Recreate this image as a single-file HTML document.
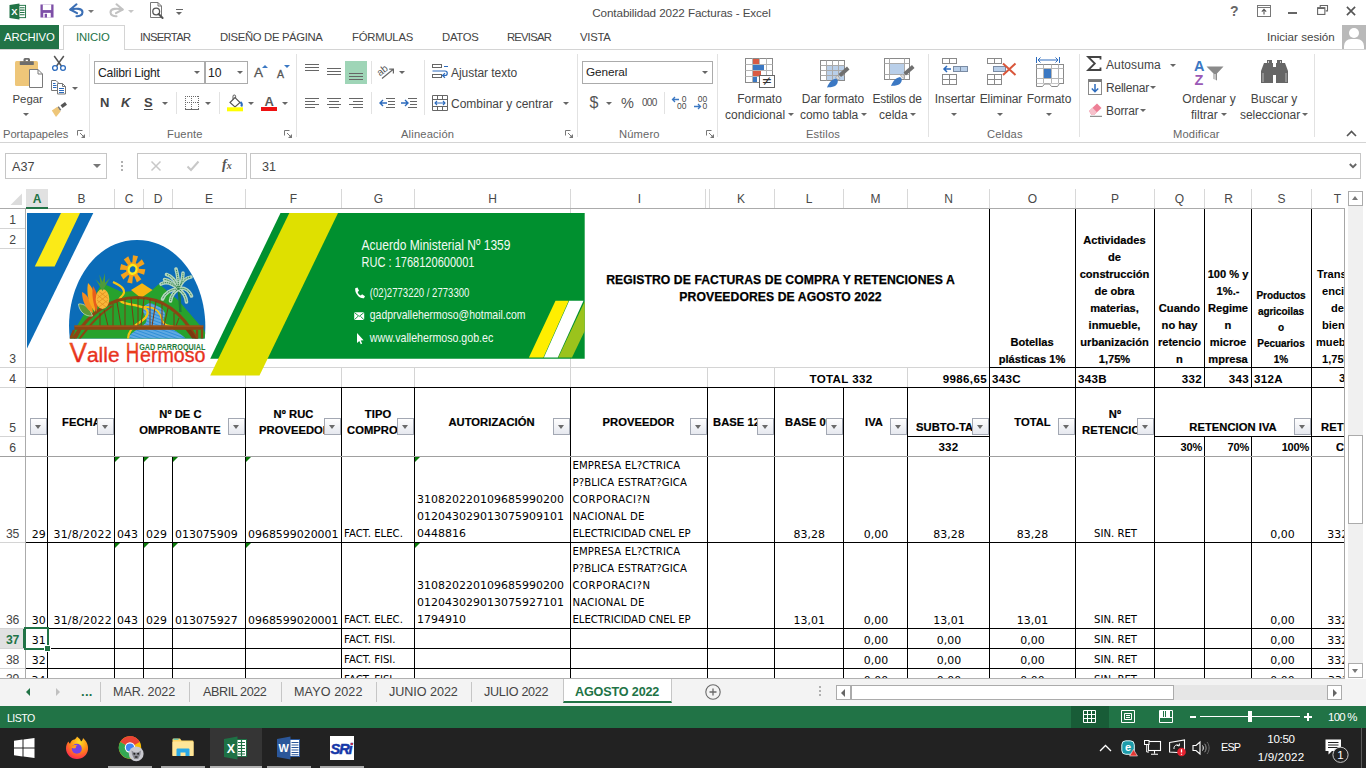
<!DOCTYPE html>
<html lang="es">
<head>
<meta charset="utf-8">
<title>Contabilidad 2022 Facturas - Excel</title>
<style>
*{box-sizing:border-box;margin:0;padding:0}
html,body{width:1366px;height:768px;overflow:hidden;background:#fff}
body{font-family:"Liberation Sans",sans-serif;font-size:12px;color:#444;position:relative}
.a{position:absolute}
.t{position:absolute;white-space:nowrap;line-height:1}
svg{position:absolute;overflow:visible}
/* ribbon */
.rl{position:absolute;white-space:nowrap;font-size:11.6px;color:#444;line-height:1}
.gl{position:absolute;white-space:nowrap;font-size:11.2px;color:#666;line-height:1;letter-spacing:.15px}
.sep{position:absolute;width:1px;background:#e2e2e2;top:54px;height:83px}
.car{position:absolute;width:0;height:0;border-left:3px solid transparent;border-right:3px solid transparent;border-top:3px solid #666}
/* grid */
.ch{position:absolute;top:190px;height:18px;line-height:18px;text-align:center;font-size:12px;color:#484848}
.rh{position:absolute;left:0;width:25px;text-align:center;font-size:12.2px;letter-spacing:-.2px;color:#444;line-height:1}
.c{position:absolute;white-space:nowrap;line-height:1;color:#000;font-size:12.4px}
.d{font-family:"DejaVu Sans","Liberation Sans",sans-serif}
.hb{position:absolute;white-space:nowrap;line-height:1;color:#000;font-weight:bold;font-size:11.2px;letter-spacing:.05px;text-align:center;-webkit-text-stroke:.2px #000}
.fb{position:absolute;width:17px;height:17px;border:1px solid #a3a8b3;background:linear-gradient(#fefefe,#e6e8ef)}
.fb:after{content:"";position:absolute;left:4px;top:6px;border-left:3.5px solid transparent;border-right:3.5px solid transparent;border-top:4px solid #6a6a6a}
.gt{position:absolute;width:0;height:0;border-top:5px solid #0a7a0a;border-right:5px solid transparent}
</style>
</head>
<body>
<!-- ===== TITLE BAR ===== -->
<div class="a" id="titlebar" style="left:0;top:0;width:1366px;height:25px;background:#fff"></div>
<!-- excel icon -->
<svg style="left:9px;top:3px" width="18" height="17" viewBox="0 0 18 18">
  <rect x="8" y="2.5" width="9" height="13" fill="#fff" stroke="#217346" stroke-width="1"/>
  <path d="M11 5h5M11 7.5h5M11 10h5M11 12.5h5" stroke="#217346" stroke-width="1.2"/>
  <path d="M0 2.2 L10.5 0.5 V17.5 L0 15.8Z" fill="#217346"/>
  <text x="5.2" y="12.6" font-family="Liberation Sans, sans-serif" font-size="10" font-weight="bold" fill="#fff" text-anchor="middle">X</text>
</svg>
<!-- save icon -->
<svg style="left:40px;top:4px" width="14" height="14" viewBox="0 0 15 15">
  <path d="M0.5 0.5h14v14h-14z" fill="#7d4fa7"/>
  <rect x="3" y="0.5" width="9" height="6" fill="#fff"/>
  <rect x="3.5" y="9.5" width="8" height="5" fill="#fff"/>
  <rect x="5" y="10.5" width="2.5" height="4" fill="#7d4fa7"/>
</svg>
<!-- undo -->
<svg style="left:68px;top:2px" width="18" height="16" viewBox="0 0 18 16">
  <path d="M2.500 7.500 C8 6 14.500 6.500 14.500 10.200 C14.500 13 11.500 14.500 8.500 14.300" fill="none" stroke="#3b6fb5" stroke-width="2.100" stroke-linecap="round"/>
  <path d="M8.500 2.300 L2.300 7.500 L9 11.200" fill="none" stroke="#3b6fb5" stroke-width="2.100" stroke-linecap="round" stroke-linejoin="round"/>
</svg>
<div class="car" style="left:88px;top:10px;border-top-color:#777"></div>
<!-- redo -->
<svg style="left:107px;top:2px" width="18" height="16" viewBox="0 0 18 16">
  <path d="M15.500 7.500 C10 6 3.500 6.500 3.500 10.200 C3.500 13 6.500 14.500 9.500 14.300" fill="none" stroke="#c2c2c2" stroke-width="2.100" stroke-linecap="round"/>
  <path d="M9.500 2.300 L15.700 7.500 L9 11.200" fill="none" stroke="#c2c2c2" stroke-width="2.100" stroke-linecap="round" stroke-linejoin="round"/>
</svg>
<div class="car" style="left:128px;top:10px;border-top-color:#c6c6c6"></div>
<!-- print preview -->
<svg style="left:149px;top:2px" width="17" height="18" viewBox="0 0 17 18">
  <path d="M1.5 0.5h7.5l3.5 3.5v11.5h-11z" fill="#fff" stroke="#777" stroke-width="1"/>
  <path d="M9 0.5v3.5h3.5" fill="none" stroke="#777" stroke-width="1"/>
  <circle cx="7.2" cy="9.5" r="3.4" fill="#fff" stroke="#555" stroke-width="1.3"/>
  <path d="M9.6 12 L13.6 16" stroke="#555" stroke-width="2" stroke-linecap="round"/>
</svg>
<!-- customize QAT -->
<div class="a" style="left:176px;top:9px;width:7px;height:1px;background:#666"></div>
<div class="car" style="left:176px;top:12px;border-top-color:#666;border-left-width:3.5px;border-right-width:3.5px"></div>
<div class="t" style="left:0;width:1363px;text-align:center;top:7px;font-size:11.7px;color:#4a4a4a;letter-spacing:-.1px">Contabilidad 2022 Facturas - Excel</div>
<!-- window buttons -->
<div class="t" style="left:1230px;top:4px;font-size:14px;font-weight:bold;color:#666">?</div>
<svg style="left:1257px;top:5px" width="14" height="12" viewBox="0 0 14 12">
  <rect x="0.5" y="0.5" width="13" height="11" fill="#fff" stroke="#777"/>
  <path d="M0.5 2.5h13" stroke="#777"/>
  <path d="M7 9.5v-5M4.8 6.6 7 4.4 9.2 6.6" fill="none" stroke="#555" stroke-width="1.1"/>
</svg>
<div class="a" style="left:1288px;top:12px;width:9px;height:2px;background:#666"></div>
<svg style="left:1317px;top:5px" width="11" height="10" viewBox="0 0 12 11">
  <path d="M3.5 2.5v-2h8v6h-2" fill="none" stroke="#666" stroke-width="1.2"/>
  <rect x="0.6" y="3" width="8" height="7.4" fill="#fff" stroke="#666" stroke-width="1.2"/>
  <path d="M0.6 3.6h8" stroke="#666" stroke-width="1.6"/>
</svg>
<svg style="left:1346px;top:6px" width="10" height="10" viewBox="0 0 11 11">
  <path d="M1 1l9 9M10 1l-9 9" stroke="#555" stroke-width="1.8"/>
</svg>

<!-- ===== RIBBON TABS ===== -->
<div class="a" style="left:0;top:49px;width:1366px;height:1px;background:#d4d4d4"></div>
<div class="a" style="left:0;top:25px;width:59px;height:24px;background:#217346"></div>
<div class="t" style="left:4px;top:31.5px;font-size:11.3px;color:#fff;letter-spacing:-0.11px">ARCHIVO</div>
<div class="a" style="left:63px;top:25px;width:62px;height:25px;background:#fff;border:1px solid #d4d4d4;border-bottom:0"></div>
<div class="t" style="left:76px;top:31.5px;font-size:11.3px;color:#217346;letter-spacing:-0.13px">INICIO</div>
<div class="t" style="left:140px;top:31.5px;font-size:11.3px;letter-spacing:-0.70px">INSERTAR</div>
<div class="t" style="left:220px;top:31.5px;font-size:11.3px;letter-spacing:-0.34px">DISEÑO DE PÁGINA</div>
<div class="t" style="left:352px;top:31.5px;font-size:11.3px;letter-spacing:-0.22px">FÓRMULAS</div>
<div class="t" style="left:442px;top:31.5px;font-size:11.3px;letter-spacing:-0.28px">DATOS</div>
<div class="t" style="left:507px;top:31.5px;font-size:11.3px;letter-spacing:-0.80px">REVISAR</div>
<div class="t" style="left:580px;top:31.5px;font-size:11.3px;letter-spacing:-0.26px">VISTA</div>
<div class="t" style="left:1267px;top:31px;font-size:11.6px">Iniciar sesión</div>
<div class="a" style="left:1342px;top:25px;width:24px;height:24px;background:#b9b9b9;overflow:hidden">
  <div class="a" style="left:7px;top:3px;width:10px;height:10px;border-radius:50%;background:#fff"></div>
  <div class="a" style="left:2px;top:14px;width:20px;height:16px;border-radius:7px 7px 0 0;background:#fff"></div>
</div>
<!-- ===== RIBBON BODY ===== -->
<div class="a" style="left:0;top:142px;width:1366px;height:1px;background:#d4d4d4"></div>
<!-- group separators -->
<div class="sep" style="left:89px"></div>
<div class="sep" style="left:296px"></div>
<div class="sep" style="left:577px"></div>
<div class="sep" style="left:717px"></div>
<div class="sep" style="left:928px"></div>
<div class="sep" style="left:1079px"></div>
<div class="sep" style="left:1314px"></div>

<!-- Portapapeles -->
<svg style="left:14px;top:57px" width="30" height="32" viewBox="0 0 30 32">
  <rect x="1" y="4" width="23" height="25" rx="1.5" fill="#eec679"/>
  <rect x="5.800" y="4.200" width="14" height="3.800" rx=".6" fill="#6d6d6d"/>
  <path d="M9.500 4.500 v-2 a1.500 1.500 0 0 1 1.500 -1.500 h3.500 a1.500 1.500 0 0 1 1.500 1.500 v2z M11.700 2.700 v1.500 h2.200 v-1.500z" fill="#6d6d6d" fill-rule="evenodd"/>
  <path d="M15.5 12.5h8.5l4.5 4.5v13.5h-13z" fill="#fff" stroke="#7a7a7a" stroke-width="1"/>
  <path d="M24 12.5v4.5h4.5" fill="none" stroke="#7a7a7a" stroke-width="1"/>
</svg>
<div class="rl" style="left:12.500px;top:94px;font-size:11.4px">Pegar</div>
<div class="car" style="left:23px;top:113px"></div>
<!-- scissors -->
<svg style="left:51px;top:55px" width="16" height="17" viewBox="0 0 16 17">
  <path d="M3.2 1 L10.6 11.2 M12.8 1 L5.4 11.2" stroke="#555" stroke-width="1.5" fill="none"/>
  <circle cx="4" cy="13" r="2.4" fill="#fff" stroke="#2c6bbd" stroke-width="1.3"/>
  <circle cx="12" cy="13" r="2.4" fill="#fff" stroke="#2c6bbd" stroke-width="1.3"/>
</svg>
<!-- copy -->
<svg style="left:51px;top:80px" width="16" height="15" viewBox="0 0 16 15">
  <path d="M0.500 0.500h4.500l2.500 2.500v7.500h-7z" fill="#fff" stroke="#777"/>
  <path d="M2 3.500h2.500M2 5.500h3.500M2 7.500h3.500" stroke="#2c6bbd" stroke-width="1"/>
  <path d="M6.500 3.500h5l3 3v7.500h-8z" fill="#fff" stroke="#777"/>
  <path d="M11.500 3.500v3h3" fill="none" stroke="#777"/>
  <path d="M8 8.500h5M8 10.500h5M8 12.500h5" stroke="#2c6bbd" stroke-width="1"/>
</svg>
<div class="car" style="left:72px;top:87px"></div>
<!-- format painter -->
<svg style="left:51px;top:101px" width="17" height="17" viewBox="0 0 17 17">
  <path d="M9.5 4.2 L14 1 L16 3.8 L11.5 7z" fill="#555"/>
  <path d="M7.8 5.2 L10.3 8.8 L8.8 9.9 L6.3 6.3z" fill="#777"/>
  <path d="M0.8 9.6 L6.4 5.8 L9.6 10.4 L5 16 Z" fill="#eec679"/>
</svg>
<div class="gl" style="left:3px;top:129px;letter-spacing:-.05px">Portapapeles</div>
<svg style="left:77px;top:130px" width="8" height="8" viewBox="0 0 8 8"><path d="M0.500 5.500V0.500H5.500" fill="none" stroke="#777"/><path d="M3 3l3.500 3.500" fill="none" stroke="#777"/><path d="M8 4V8H4Z" fill="#777"/></svg>

<!-- Fuente -->
<div class="a" style="left:94px;top:61px;width:111px;height:23px;border:1px solid #ababab;background:#fff"></div>
<div class="a" style="left:205px;top:61px;width:43px;height:23px;border:1px solid #ababab;background:#fff"></div>
<div class="t" style="left:98px;top:67px;font-size:12.2px;color:#222;letter-spacing:-.2px">Calibri Light</div>
<div class="car" style="left:194px;top:71px"></div>
<div class="t" style="left:208px;top:67px;font-size:12.2px;color:#222">10</div>
<div class="car" style="left:237px;top:71px"></div>
<div class="t" style="left:254px;top:66px;font-size:13.500px;color:#555;-webkit-text-stroke:.3px #555">A</div>
<div class="a" style="left:262px;top:65px;width:0;height:0;border-left:3px solid transparent;border-right:3px solid transparent;border-bottom:3.500px solid #3b78c3"></div>
<div class="t" style="left:277px;top:68.500px;font-size:10.500px;color:#555;-webkit-text-stroke:.3px #555">A</div>
<div class="a" style="left:284px;top:65px;width:0;height:0;border-left:3px solid transparent;border-right:3px solid transparent;border-top:3.500px solid #3b78c3"></div>
<div class="t" style="left:100px;top:96px;font-size:13px;font-weight:bold;color:#444">N</div>
<div class="t" style="left:121px;top:96px;font-size:13px;font-weight:bold;font-style:italic;color:#444">K</div>
<div class="t" style="left:144px;top:96px;font-size:13px;font-weight:bold;color:#444;text-decoration:underline;text-underline-offset:2px">S</div>
<div class="car" style="left:162px;top:102px"></div>
<div class="a" style="left:176px;top:92px;width:1px;height:22px;background:#e2e2e2"></div>
<svg style="left:185px;top:96px" width="14" height="14" viewBox="0 0 14 14">
  <path d="M0 0.500h14M0.500 0v13M13.500 0v13M6.500 0v13M0 6.500h14" fill="none" stroke="#6a6a6a" stroke-width="1" stroke-dasharray="1 1" shape-rendering="crispEdges"/><path d="M0 13.500h14" stroke="#6a6a6a" stroke-width="1" shape-rendering="crispEdges"/>
</svg>
<div class="car" style="left:205px;top:102px"></div>
<div class="a" style="left:219px;top:92px;width:1px;height:22px;background:#e2e2e2"></div>
<!-- fill bucket -->
<svg style="left:227px;top:94px" width="17" height="18" viewBox="0 0 17 18">
  <path d="M3 8.5 L8 3.5 L13 8.5 L8 13z" fill="#fff" stroke="#555" stroke-width="1.1"/>
  <path d="M6 5.5 V2.3 a1.3 1.3 0 0 1 2.6 0 V4" fill="none" stroke="#555" stroke-width="1"/>
  <path d="M13.4 8 c1.5 1.3 1.8 3 0.9 4.5" fill="none" stroke="#2c6bbd" stroke-width="2"/>
  <rect x="0" y="13.300" width="16" height="4" fill="#ffff00"/>
</svg>
<div class="car" style="left:248px;top:102px"></div>
<div class="t" style="left:264.500px;top:95px;font-size:13px;font-weight:bold;color:#5a5a5a">A</div>
<div class="a" style="left:261px;top:107px;width:16px;height:4px;background:#ee1111"></div>
<div class="car" style="left:282px;top:102px"></div>
<div class="gl" style="left:167px;top:129px">Fuente</div>
<svg style="left:284px;top:130px" width="8" height="8" viewBox="0 0 8 8"><path d="M0.500 5.500V0.500H5.500" fill="none" stroke="#777"/><path d="M3 3l3.500 3.500" fill="none" stroke="#777"/><path d="M8 4V8H4Z" fill="#777"/></svg>

<!-- Alineación -->
<div class="a" style="left:345px;top:61px;width:22px;height:23px;background:#9fd5b7"></div>
<svg style="left:305px;top:61px" width="62" height="52" viewBox="0 0 62 52">
  <g stroke="#666" stroke-width="1" fill="none">
    <path d="M0 3.5h14M0 6.5h14M0 9.5h14"/>
    <path d="M22 7.500h14M22 10.5h14M22 13.5h14"/>
    <path d="M44 12.5h14M44 15.5h14M44 18.5h14"/>
    <path d="M0 37.5h14M0 40.5h10M0 43.5h14M0 46.5h10"/>
    <path d="M22 37.5h14M24 40.5h10M22 43.5h14M24 46.5h10"/>
    <path d="M44 37.5h14M48 40.5h10M44 43.5h14M48 46.5h10"/>
  </g>
</svg>
<div class="a" style="left:371px;top:61px;width:1px;height:23px;background:#e2e2e2"></div>
<div class="a" style="left:371px;top:92px;width:1px;height:22px;background:#e2e2e2"></div>
<!-- orientation -->
<svg style="left:378px;top:63px" width="19" height="18" viewBox="0 0 19 18">
  <text x="0" y="10" font-family="Liberation Sans, sans-serif" font-size="10" fill="#555" transform="rotate(-38 6 9)">ab</text>
  <path d="M4 15.5 L15 6.5 M15.4 10.5 V6.2 H11.2" fill="none" stroke="#666" stroke-width="1.2"/>
</svg>
<div class="car" style="left:399px;top:71px"></div>
<!-- indent -->
<svg style="left:379px;top:97px" width="40" height="13" viewBox="0 0 40 13">
  <g stroke="#666" stroke-width="1" fill="none"><path d="M7 1.500h9M9 4.500h7M9 7.500h7M7 10.5h9"/><path d="M29 1.500h9M31 4.500h7M31 7.500h7M29 10.5h9"/></g>
  <g stroke="#2c6bbd" stroke-width="1.4" fill="none"><path d="M8 6H1M4 3L1 6l3 3"/><path d="M22 6h7M26 3l3 3-3 3"/></g>
</svg>
<div class="a" style="left:424px;top:60px;width:1px;height:55px;background:#e2e2e2"></div>
<!-- wrap text -->
<svg style="left:432px;top:64px" width="17" height="16" viewBox="0 0 17 16">
  <g fill="none" stroke="#666" stroke-width="1"><rect x="0.5" y="0.5" width="9" height="3"/><rect x="0.5" y="10.5" width="9" height="3"/></g>
  <path d="M0.5 7h12.5a2 2 0 0 1 0 4.500h-2" fill="none" stroke="#2c6bbd" stroke-width="1.2"/>
  <path d="M13 9.300 10.500 11.500 13 13.700" fill="none" stroke="#2c6bbd" stroke-width="1.2"/>
  <path d="M12 2.500h4" stroke="#2c6bbd" stroke-width="1"/>
</svg>
<div class="rl" style="left:451px;top:67px;font-size:12px;letter-spacing:-.05px">Ajustar texto</div>
<!-- merge -->
<svg style="left:432px;top:95px" width="16" height="16" viewBox="0 0 16 16">
  <path d="M0.5 0.5h15v15h-15zM0.5 4.500h15M0.5 11.500h15M5.500 0.500v4M10.500 0.500v4M5.500 11.500v4M10.500 11.500v4" fill="none" stroke="#666" stroke-width="1"/>
  <path d="M3 8h10M5 6 3 8l2 2M11 6l2 2-2 2" fill="none" stroke="#2c6bbd" stroke-width="1.1"/>
</svg>
<div class="rl" style="left:451px;top:98px;font-size:12px">Combinar y centrar</div>
<div class="car" style="left:563px;top:102px"></div>
<div class="gl" style="left:401px;top:129px">Alineación</div>
<svg style="left:565px;top:130px" width="8" height="8" viewBox="0 0 8 8"><path d="M0.500 5.500V0.500H5.500" fill="none" stroke="#777"/><path d="M3 3l3.500 3.500" fill="none" stroke="#777"/><path d="M8 4V8H4Z" fill="#777"/></svg>
<!-- Número -->
<div class="a" style="left:582px;top:61px;width:131px;height:23px;border:1px solid #ababab;background:#fff"></div>
<div class="t" style="left:586px;top:67px;font-size:11.8px;color:#222;letter-spacing:-.1px">General</div>
<div class="car" style="left:702px;top:71px"></div>
<div class="t" style="left:589.500px;top:95px;font-size:16px;color:#555">$</div>
<div class="car" style="left:606px;top:102px"></div>
<div class="t" style="left:621px;top:95.500px;font-size:14.500px;color:#555">%</div>
<div class="t" style="left:642px;top:98.300px;font-size:10px;color:#505050;letter-spacing:-.7px">000</div>
<div class="a" style="left:664px;top:92px;width:1px;height:22px;background:#e2e2e2"></div>
<svg style="left:671px;top:96px" width="38" height="14" viewBox="0 0 38 14">
  <g font-family="Liberation Sans, sans-serif" font-size="8.500" fill="#4a4a4a">
    <text x="10.800" y="6.300">0</text><text x="6" y="13.400">00</text>
    <text x="26.800" y="6.300">00</text><text x="31.500" y="13.400">0</text>
  </g>
  <g stroke="#3b78c3" stroke-width="1.300" fill="none"><path d="M8 3.500H1.500M4 1l-2.500 2.500L4 6"/><path d="M23 10.500h6.500M27 8l2.500 2.500L27 13"/></g>
</svg>
<div class="gl" style="left:619px;top:129px">Número</div>
<svg style="left:706px;top:130px" width="8" height="8" viewBox="0 0 8 8"><path d="M0.500 5.500V0.500H5.500" fill="none" stroke="#777"/><path d="M3 3l3.500 3.500" fill="none" stroke="#777"/><path d="M8 4V8H4Z" fill="#777"/></svg>

<!-- Estilos: Formato condicional -->
<svg style="left:745px;top:58px" width="31" height="30" viewBox="0 0 31 30">
  <rect x="0.5" y="0.5" width="27" height="24" fill="#fff" stroke="#8a8a8a"/>
  <path d="M0.5 6.500h27M0.5 12.500h27M0.5 18.500h27M7.500 0.500v24M14.500 0.500v24M21.500 0.500v24" stroke="#b5b5b5" stroke-width="1" fill="none"/>
  <rect x="8" y="1" width="6" height="5" fill="#d95b43"/>
  <rect x="8" y="7" width="11" height="5" fill="#3b78c3"/>
  <rect x="8" y="13" width="8" height="5" fill="#d95b43"/>
  <rect x="8" y="19" width="4" height="5" fill="#3b78c3"/>
  <rect x="14.500" y="17.500" width="15" height="12" fill="#fff" stroke="#666"/>
  <text x="22" y="27.300" font-family="DejaVu Sans, sans-serif" font-size="12.500" fill="#333" text-anchor="middle">≠</text>
</svg>
<div class="rl" style="left:727px;width:65px;text-align:center;top:93px;font-size:12px">Formato</div>
<div class="rl" style="left:725px;top:109px;font-size:12px">condicional</div>
<div class="car" style="left:788px;top:113px"></div>
<!-- Dar formato como tabla -->
<svg style="left:820px;top:60px" width="31" height="29" viewBox="0 0 31 29">
  <rect x="0.5" y="0.5" width="24" height="20" fill="#fff" stroke="#8a8a8a"/>
  <rect x="7" y="6" width="17" height="14" fill="#b9cfe9"/>
  <path d="M0.5 5.500h24M0.5 10.500h24M0.5 15.500h24M6.500 0.500v20M12.500 0.500v20M18.500 0.500v20" stroke="#a9a9a9" stroke-width="1" fill="none"/>
  <path d="M18.500 14 L27 6.500 L29.500 9.500 L21 17z" fill="#6f6f6f"/>
  <path d="M17.500 15.500 L20 18.500 L18 20 L15.500 17z" fill="#d9d9d9" stroke="#888" stroke-width=".5"/>
  <path d="M7 27.500 C9 22 12 19.500 16 18.500 C19 20 18 24 15 26 C12 27.500 9 27 7 27.500z" fill="#3b78c3"/>
</svg>
<div class="rl" style="left:800px;width:66px;text-align:center;top:93px;font-size:12px;letter-spacing:-.1px">Dar formato</div>
<div class="rl" style="left:800px;top:109px;font-size:12px;letter-spacing:-.05px">como tabla</div>
<div class="car" style="left:861px;top:113px"></div>
<!-- Estilos de celda -->
<svg style="left:884px;top:58px" width="32" height="30" viewBox="0 0 32 30">
  <rect x="0.5" y="0.5" width="25" height="21" fill="#fff" stroke="#8a8a8a"/>
  <path d="M0.5 5.500h25M0.5 16.500h25M5.500 0.500v21M20.500 0.500v21" stroke="#a9a9a9" stroke-width="1" fill="none"/>
  <rect x="6" y="6" width="14" height="10" fill="#b9cfe9"/>
  <path d="M19.500 14.500 L28 7 L30.500 10 L22 17.500z" fill="#6f6f6f"/>
  <path d="M18.500 16 L21 19 L19 20.500 L16.500 17.500z" fill="#d9d9d9" stroke="#888" stroke-width=".5"/>
  <path d="M7 28 C9 22.500 12 20 16 19 C19 20.500 18 24.500 15 26.500 C12 28 9 27.500 7 28z" fill="#3b78c3"/>
</svg>
<div class="rl" style="left:864px;width:66px;text-align:center;top:93px;font-size:12px;letter-spacing:-.3px">Estilos de</div>
<div class="rl" style="left:879px;top:109px;font-size:12px">celda</div>
<div class="car" style="left:910px;top:113px"></div>
<div class="gl" style="left:806px;top:129px">Estilos</div>

<!-- Celdas: Insertar -->
<svg style="left:942px;top:58px" width="27" height="28" viewBox="0 0 27 28">
  <g fill="#fff" stroke="#8a8a8a" stroke-width="1"><rect x="0.5" y="0.5" width="14" height="5"/><path d="M7.500 0.500v5"/><rect x="0.5" y="16.500" width="14" height="10"/><path d="M0.5 21.500h14M7.500 16.500v10"/></g>
  <rect x="11.500" y="8.500" width="14" height="5" fill="#b9cfe9" stroke="#7a8ba3"/><path d="M18.500 8.500v5" stroke="#7a8ba3"/>
  <path d="M9 11H2M5 8l-3 3 3 3" fill="none" stroke="#2c6bbd" stroke-width="1.500"/>
</svg>
<div class="rl" style="left:922px;width:66px;text-align:center;top:93px;font-size:12px">Insertar</div>
<div class="car" style="left:951px;top:113px"></div>
<!-- Eliminar -->
<svg style="left:987px;top:58px" width="30" height="28" viewBox="0 0 30 28">
  <g fill="#fff" stroke="#8a8a8a" stroke-width="1"><rect x="0.5" y="0.5" width="14" height="5"/><path d="M7.500 0.500v5"/><rect x="0.5" y="16.500" width="14" height="10"/><path d="M0.5 21.500h14M7.500 16.500v10"/></g>
  <rect x="6.500" y="8.500" width="12" height="5" fill="#b9cfe9" stroke="#7a8ba3"/>
  <path d="M16 5.500 L28.500 17 M28.500 5.500 L16 17" stroke="#d9573b" stroke-width="2" fill="none"/>
</svg>
<div class="rl" style="left:968px;width:66px;text-align:center;top:93px;font-size:12px;letter-spacing:-.1px">Eliminar</div>
<div class="car" style="left:997px;top:113px"></div>
<!-- Formato -->
<svg style="left:1036px;top:56px" width="29" height="32" viewBox="0 0 29 32">
  <path d="M0.5 1v6M23.500 1v6M2 4h20M4.500 1.500 2 4l2.500 2.500M19.500 1.500 22 4l-2.500 2.500" fill="none" stroke="#2c6bbd" stroke-width="1"/>
  <rect x="0.5" y="8.500" width="27" height="19" fill="#fff" stroke="#8a8a8a"/>
  <path d="M0.5 12.500h27M0.5 22.500h27M7.500 8.500v19M15.500 8.500v19M22.500 8.500v19" stroke="#b5b5b5" fill="none"/>
  <rect x="8" y="13" width="7" height="9" fill="#3b78c3"/>
  <path d="M0.5 27.500v3h6l2-2.500h5l2 2.500h6l2-3" fill="#fff" stroke="#8a8a8a"/>
</svg>
<div class="rl" style="left:1016px;width:66px;text-align:center;top:93px;font-size:12px">Formato</div>
<div class="car" style="left:1046px;top:113px"></div>
<div class="gl" style="left:987px;top:129px">Celdas</div>

<!-- Modificar -->
<svg style="left:1087px;top:56px" width="15" height="15" viewBox="0 0 15 15">
  <path d="M13.500 3.500V1H1.200L7.800 7.500 1.200 14h12.300v-2.500" fill="none" stroke="#444" stroke-width="1.800"/>
</svg>
<div class="rl" style="left:1106px;top:59px;font-size:12px;letter-spacing:.1px">Autosuma</div>
<div class="car" style="left:1170px;top:64px"></div>
<svg style="left:1088px;top:79px" width="14" height="16" viewBox="0 0 14 16">
  <rect x="0.5" y="0.5" width="13" height="15" fill="#fff" stroke="#8a8a8a"/>
  <rect x="0.5" y="0.5" width="13" height="2.500" fill="#777"/>
  <path d="M7 5v7.500M3.800 9.500 7 12.700l3.200-3.200" fill="none" stroke="#2c6bbd" stroke-width="1.500"/>
</svg>
<div class="rl" style="left:1106px;top:82px;font-size:12px;letter-spacing:-.22px">Rellenar</div>
<div class="car" style="left:1150px;top:86px"></div>
<svg style="left:1088px;top:102px" width="16" height="15" viewBox="0 0 16 15">
  <path d="M1 9 L9 1.500 L13.500 6 L6 13 H3.500z" fill="#ee7f96"/>
  <path d="M1 9 L4.500 5.800 L9 10.200 L6 13 H3.500z" fill="#f6c2cc"/>
  <path d="M2 14.300h12" stroke="#777" stroke-width="1"/>
</svg>
<div class="rl" style="left:1106px;top:105px;font-size:12px;letter-spacing:-.12px">Borrar</div>
<div class="car" style="left:1140px;top:109px"></div>
<!-- Ordenar y filtrar -->
<svg style="left:1193px;top:57px" width="32" height="30" viewBox="0 0 32 30">
  <text x="1" y="13.500" font-family="Liberation Sans, sans-serif" font-size="14.500" font-weight="bold" fill="#3b78c3">A</text>
  <text x="1.500" y="28" font-family="Liberation Sans, sans-serif" font-size="14.500" font-weight="bold" fill="#9b59b6">Z</text>
  <path d="M13.500 9.500h17l-6.500 7v7l-3.500-1.500v-5.500z" fill="#8a8a8a"/>
  <path d="M22 17v6" stroke="#fff" stroke-width="1"/>
</svg>
<div class="rl" style="left:1176px;width:66px;text-align:center;top:93px;font-size:12px">Ordenar y</div>
<div class="rl" style="left:1191px;top:109px;font-size:12px">filtrar</div>
<div class="car" style="left:1221px;top:113px"></div>
<!-- Buscar y seleccionar -->
<svg style="left:1261px;top:60px" width="27" height="24" viewBox="0 0 27 24">
  <path d="M6 0h5v3h1v20H0V11l3-8h3z" fill="#666"/>
  <path d="M21 0h-5v3h-1v20h12V11l-3-8h-3z" fill="#666"/>
  <rect x="11" y="7" width="5" height="8" fill="#666"/>
  <path d="M2 13v9M25 13v9" stroke="#bbb" stroke-width="1"/>
  <path d="M7.500 1v2M19.500 1v2" stroke="#ccc" stroke-width="1"/>
</svg>
<div class="rl" style="left:1241px;width:66px;text-align:center;top:93px;font-size:12px">Buscar y</div>
<div class="rl" style="left:1240px;top:109px;font-size:12px;letter-spacing:-.05px">seleccionar</div>
<div class="car" style="left:1302px;top:113px"></div>
<div class="gl" style="left:1173px;top:129px">Modificar</div>
<svg style="left:1346px;top:130px" width="11" height="7" viewBox="0 0 11 7"><path d="M1 6l4.500-4.500L10 6" fill="none" stroke="#555" stroke-width="1.600"/></svg>
<!-- ===== FORMULA BAR ===== -->
<div class="a" style="left:5px;top:153px;width:102px;height:26px;border:1px solid #c6c6c6;background:#fff"></div>
<div class="t" style="left:12px;top:160.800px;font-size:12.6px;color:#444">A37</div>
<div class="car" style="left:93px;top:164px;border-left-width:4px;border-right-width:4px;border-top-width:4px;border-top-color:#777"></div>
<div class="a" style="left:121px;top:161px;width:2px;height:2px;background:#b0b0b0;box-shadow:0 4px 0 #b0b0b0,0 8px 0 #b0b0b0"></div>
<div class="a" style="left:137px;top:153px;width:110px;height:26px;border:1px solid #c6c6c6;background:#fff"></div>
<svg style="left:150px;top:160px" width="12" height="12" viewBox="0 0 12 12"><path d="M1.500 1.500l9 9M10.500 1.500l-9 9" stroke="#c8c8c8" stroke-width="1.500"/></svg>
<svg style="left:186px;top:160px" width="14" height="12" viewBox="0 0 14 12"><path d="M1.500 6.500l3.500 3.500 7.500-8.500" fill="none" stroke="#c8c8c8" stroke-width="2"/></svg>
<div class="t" style="left:222px;top:158px;font-family:'Liberation Serif',serif;font-style:italic;font-size:14px;color:#555;font-weight:bold">f<span style="font-size:10px">x</span></div>
<div class="a" style="left:250px;top:153px;width:1111px;height:26px;border:1px solid #c6c6c6;background:#fff"></div>
<div class="t" style="left:262px;top:160.800px;font-size:12.6px;color:#444">31</div>
<svg style="left:1349px;top:162.500px" width="8" height="6" viewBox="0 0 8 6"><path d="M0.800 1l3.200 3.200 3.200-3.200" fill="none" stroke="#666" stroke-width="1.900"/></svg>
<!-- ===== GRID ===== -->
<div class="a" id="grid" style="left:0;top:189px;width:1345px;height:490px;background:#fff;overflow:hidden"></div>
<div class="a" style="left:26px;top:189px;width:22px;height:18px;background:#e1e1e1"></div>
<div class="a" style="left:26px;top:207px;width:22px;height:2px;background:#217346"></div>
<div class="a" style="left:0;top:208px;width:26px;height:1px;background:#ababab"></div>
<div class="a" style="left:48px;top:208px;width:1297px;height:1px;background:#ababab"></div>
<svg style="left:10px;top:193px" width="13" height="13" viewBox="0 0 13 13"><path d="M12 0.500V12H0.500z" fill="#dcdcdc"/></svg>
<div class="a" style="left:114px;top:189px;width:1px;height:19px;background:#d8d8d8"></div>
<div class="a" style="left:143px;top:189px;width:1px;height:19px;background:#d8d8d8"></div>
<div class="a" style="left:172px;top:189px;width:1px;height:19px;background:#d8d8d8"></div>
<div class="a" style="left:245px;top:189px;width:1px;height:19px;background:#d8d8d8"></div>
<div class="a" style="left:341px;top:189px;width:1px;height:19px;background:#d8d8d8"></div>
<div class="a" style="left:414px;top:189px;width:1px;height:19px;background:#d8d8d8"></div>
<div class="a" style="left:570px;top:189px;width:1px;height:19px;background:#d8d8d8"></div>
<div class="a" style="left:705px;top:189px;width:1px;height:19px;background:#d8d8d8"></div>
<div class="a" style="left:774px;top:189px;width:1px;height:19px;background:#d8d8d8"></div>
<div class="a" style="left:843px;top:189px;width:1px;height:19px;background:#d8d8d8"></div>
<div class="a" style="left:907px;top:189px;width:1px;height:19px;background:#d8d8d8"></div>
<div class="a" style="left:989px;top:189px;width:1px;height:19px;background:#d8d8d8"></div>
<div class="a" style="left:1075px;top:189px;width:1px;height:19px;background:#d8d8d8"></div>
<div class="a" style="left:1154px;top:189px;width:1px;height:19px;background:#d8d8d8"></div>
<div class="a" style="left:1204px;top:189px;width:1px;height:19px;background:#d8d8d8"></div>
<div class="a" style="left:1251px;top:189px;width:1px;height:19px;background:#d8d8d8"></div>
<div class="a" style="left:1311px;top:189px;width:1px;height:19px;background:#d8d8d8"></div>
<div class="a" style="left:709px;top:189px;width:1px;height:19px;background:#d8d8d8"></div>
<div class="ch" style="left:22.0px;width:30px;color:#217346;font-weight:bold;">A</div>
<div class="ch" style="left:66.5px;width:30px;">B</div>
<div class="ch" style="left:114.0px;width:30px;">C</div>
<div class="ch" style="left:143.0px;width:30px;">D</div>
<div class="ch" style="left:194.0px;width:30px;">E</div>
<div class="ch" style="left:278.5px;width:30px;">F</div>
<div class="ch" style="left:363.5px;width:30px;">G</div>
<div class="ch" style="left:477.5px;width:30px;">H</div>
<div class="ch" style="left:624.5px;width:30px;">I</div>
<div class="ch" style="left:726.0px;width:30px;">K</div>
<div class="ch" style="left:794.0px;width:30px;">L</div>
<div class="ch" style="left:860.5px;width:30px;">M</div>
<div class="ch" style="left:933.5px;width:30px;">N</div>
<div class="ch" style="left:1017.5px;width:30px;">O</div>
<div class="ch" style="left:1100.0px;width:30px;">P</div>
<div class="ch" style="left:1164.5px;width:30px;">Q</div>
<div class="ch" style="left:1213.5px;width:30px;">R</div>
<div class="ch" style="left:1266.5px;width:30px;">S</div>
<div class="ch" style="left:1322.5px;width:30px;">T</div>
<div class="a" style="left:25px;top:208px;width:1px;height:471px;background:#ababab"></div>
<div class="a" style="left:0px;top:228px;width:25px;height:1px;background:#d4d4d4"></div>
<div class="a" style="left:0px;top:248px;width:25px;height:1px;background:#d4d4d4"></div>
<div class="a" style="left:0px;top:367px;width:25px;height:1px;background:#d4d4d4"></div>
<div class="a" style="left:0px;top:387px;width:25px;height:1px;background:#d4d4d4"></div>
<div class="a" style="left:0px;top:436px;width:25px;height:1px;background:#d4d4d4"></div>
<div class="a" style="left:0px;top:542px;width:25px;height:1px;background:#d4d4d4"></div>
<div class="a" style="left:0px;top:628px;width:25px;height:1px;background:#d4d4d4"></div>
<div class="a" style="left:0px;top:648px;width:25px;height:1px;background:#d4d4d4"></div>
<div class="a" style="left:0px;top:668px;width:25px;height:1px;background:#d4d4d4"></div>
<div class="a" style="left:0;top:629px;width:25px;height:19px;background:#e1e1e1"></div>
<div class="a" style="left:23px;top:629px;width:2px;height:19px;background:#217346"></div>
<div class="rh" style="top:214.22px;">1</div>
<div class="rh" style="top:234.22px;">2</div>
<div class="rh" style="top:353.22px;">3</div>
<div class="rh" style="top:373.22px;">4</div>
<div class="rh" style="top:422.22px;">5</div>
<div class="rh" style="top:442.22px;">6</div>
<div class="rh" style="top:528.22px;">35</div>
<div class="rh" style="top:614.22px;">36</div>
<div class="rh" style="top:634.22px;color:#217346;font-weight:bold;">37</div>
<div class="rh" style="top:654.22px;">38</div>
<div class="rh" style="top:673.42px;">39</div>
<div class="a" style="left:26px;top:367px;width:963px;height:1px;background:#d4d4d4"></div>
<div class="a" style="left:47px;top:368px;width:1px;height:19px;background:#d4d4d4"></div>
<div class="a" style="left:114px;top:368px;width:1px;height:19px;background:#d4d4d4"></div>
<div class="a" style="left:143px;top:368px;width:1px;height:19px;background:#d4d4d4"></div>
<div class="a" style="left:172px;top:368px;width:1px;height:19px;background:#d4d4d4"></div>
<div class="a" style="left:245px;top:368px;width:1px;height:19px;background:#d4d4d4"></div>
<div class="a" style="left:341px;top:368px;width:1px;height:19px;background:#d4d4d4"></div>
<div class="a" style="left:414px;top:368px;width:1px;height:19px;background:#d4d4d4"></div>
<div class="a" style="left:570px;top:368px;width:1px;height:19px;background:#d4d4d4"></div>
<div class="a" style="left:707px;top:368px;width:1px;height:19px;background:#d4d4d4"></div>
<div class="a" style="left:774px;top:368px;width:1px;height:19px;background:#d4d4d4"></div>
<div class="a" style="left:907px;top:368px;width:1px;height:19px;background:#d4d4d4"></div>
<div class="a" style="left:570px;top:209px;width:1px;height:158px;background:#d4d4d4"></div>
<div class="a" style="left:989px;top:209px;width:1px;height:178px;background:#000"></div>
<div class="a" style="left:1075px;top:209px;width:1px;height:178px;background:#000"></div>
<div class="a" style="left:1154px;top:209px;width:1px;height:178px;background:#000"></div>
<div class="a" style="left:1204px;top:209px;width:1px;height:178px;background:#000"></div>
<div class="a" style="left:1251px;top:209px;width:1px;height:178px;background:#000"></div>
<div class="a" style="left:1311px;top:209px;width:1px;height:178px;background:#000"></div>
<div class="a" style="left:989px;top:367px;width:355px;height:1px;background:#000"></div>
<div class="a" style="left:26px;top:387px;width:1318px;height:1px;background:#000"></div>
<div class="a" style="left:47px;top:387px;width:1px;height:69px;background:#000"></div>
<div class="a" style="left:114px;top:387px;width:1px;height:69px;background:#000"></div>
<div class="a" style="left:245px;top:387px;width:1px;height:69px;background:#000"></div>
<div class="a" style="left:341px;top:387px;width:1px;height:69px;background:#000"></div>
<div class="a" style="left:414px;top:387px;width:1px;height:69px;background:#000"></div>
<div class="a" style="left:570px;top:387px;width:1px;height:69px;background:#000"></div>
<div class="a" style="left:707px;top:387px;width:1px;height:69px;background:#000"></div>
<div class="a" style="left:774px;top:387px;width:1px;height:69px;background:#000"></div>
<div class="a" style="left:843px;top:387px;width:1px;height:69px;background:#000"></div>
<div class="a" style="left:907px;top:387px;width:1px;height:69px;background:#000"></div>
<div class="a" style="left:989px;top:387px;width:1px;height:69px;background:#000"></div>
<div class="a" style="left:1075px;top:387px;width:1px;height:69px;background:#000"></div>
<div class="a" style="left:1154px;top:387px;width:1px;height:69px;background:#000"></div>
<div class="a" style="left:1311px;top:387px;width:1px;height:69px;background:#000"></div>
<div class="a" style="left:1204px;top:436px;width:1px;height:20px;background:#000"></div>
<div class="a" style="left:1251px;top:436px;width:1px;height:20px;background:#000"></div>
<div class="a" style="left:907px;top:436px;width:82px;height:1px;background:#000"></div>
<div class="a" style="left:1154px;top:436px;width:190px;height:1px;background:#000"></div>
<div class="a" style="left:47px;top:457px;width:1px;height:222px;background:#000"></div>
<div class="a" style="left:114px;top:457px;width:1px;height:222px;background:#000"></div>
<div class="a" style="left:143px;top:457px;width:1px;height:222px;background:#000"></div>
<div class="a" style="left:172px;top:457px;width:1px;height:222px;background:#000"></div>
<div class="a" style="left:245px;top:457px;width:1px;height:222px;background:#000"></div>
<div class="a" style="left:341px;top:457px;width:1px;height:222px;background:#000"></div>
<div class="a" style="left:414px;top:457px;width:1px;height:222px;background:#000"></div>
<div class="a" style="left:570px;top:457px;width:1px;height:222px;background:#000"></div>
<div class="a" style="left:707px;top:457px;width:1px;height:222px;background:#000"></div>
<div class="a" style="left:774px;top:457px;width:1px;height:222px;background:#000"></div>
<div class="a" style="left:843px;top:457px;width:1px;height:222px;background:#000"></div>
<div class="a" style="left:907px;top:457px;width:1px;height:222px;background:#000"></div>
<div class="a" style="left:989px;top:457px;width:1px;height:222px;background:#000"></div>
<div class="a" style="left:1075px;top:457px;width:1px;height:222px;background:#000"></div>
<div class="a" style="left:1154px;top:457px;width:1px;height:222px;background:#000"></div>
<div class="a" style="left:1204px;top:457px;width:1px;height:222px;background:#000"></div>
<div class="a" style="left:1251px;top:457px;width:1px;height:222px;background:#000"></div>
<div class="a" style="left:1311px;top:457px;width:1px;height:222px;background:#000"></div>
<div class="a" style="left:26px;top:542px;width:1318px;height:1px;background:#000"></div>
<div class="a" style="left:26px;top:628px;width:1318px;height:1px;background:#000"></div>
<div class="a" style="left:26px;top:648px;width:1318px;height:1px;background:#000"></div>
<div class="a" style="left:26px;top:668px;width:1318px;height:1px;background:#000"></div>
<div class="a" style="left:0px;top:456px;width:1345px;height:1px;background:#a0a0a0"></div>
<div class="a" style="left:1344px;top:209px;width:1px;height:470px;background:#a6a6a6"></div>
<div class="a" style="left:0px;top:678px;width:1345px;height:1px;background:#b0b0b0"></div>
<div class="fb" style="left:30px;top:418px"></div>
<div class="fb" style="left:97px;top:418px"></div>
<div class="fb" style="left:228px;top:418px"></div>
<div class="fb" style="left:324px;top:418px"></div>
<div class="fb" style="left:397px;top:418px"></div>
<div class="fb" style="left:553px;top:418px"></div>
<div class="fb" style="left:690px;top:418px"></div>
<div class="fb" style="left:757px;top:418px"></div>
<div class="fb" style="left:826px;top:418px"></div>
<div class="fb" style="left:890px;top:418px"></div>
<div class="fb" style="left:972px;top:418px"></div>
<div class="fb" style="left:1058px;top:418px"></div>
<div class="fb" style="left:1137px;top:418px"></div>
<div class="fb" style="left:1294px;top:418px"></div>
<div class="gt" style="left:115px;top:457px"></div>
<div class="gt" style="left:144px;top:457px"></div>
<div class="gt" style="left:173px;top:457px"></div>
<div class="gt" style="left:246px;top:457px"></div>
<div class="gt" style="left:415px;top:457px"></div>
<div class="gt" style="left:115px;top:543px"></div>
<div class="gt" style="left:144px;top:543px"></div>
<div class="gt" style="left:173px;top:543px"></div>
<div class="gt" style="left:246px;top:543px"></div>
<div class="gt" style="left:415px;top:543px"></div>
<div class="c d" style="top:529.73px;font-size:10.95px;right:1320.4px;">29</div>
<div class="c d" style="top:529.73px;font-size:10.95px;right:1254px;letter-spacing:.28px;">31/8/2022</div>
<div class="c d" style="top:529.73px;font-size:10.95px;left:117px;">043</div>
<div class="c d" style="top:529.73px;font-size:10.95px;left:146px;">029</div>
<div class="c d" style="top:529.73px;font-size:10.95px;left:175px;">013075909</div>
<div class="c d" style="top:529.73px;font-size:10.95px;left:248px;">0968599020001</div>
<div class="c d" style="top:528.91px;font-size:10.15px;left:344px;">FACT. ELEC.</div>
<div class="c d" style="top:529.23px;font-size:10.95px;left:417px;letter-spacing:.04px;">0448816</div>
<div class="c d" style="top:512.23px;font-size:10.95px;left:417px;letter-spacing:.04px;">012043029013075909101</div>
<div class="c d" style="top:495.23px;font-size:10.95px;left:417px;letter-spacing:.04px;">310820220109685990200</div>
<div class="c d" style="top:529.41px;font-size:10.15px;left:572.5px;letter-spacing:-0.08px;">ELECTRICIDAD CNEL EP</div>
<div class="c d" style="top:512.41px;font-size:10.15px;left:572.5px;letter-spacing:0.2px;">NACIONAL DE</div>
<div class="c d" style="top:495.41px;font-size:10.15px;left:572.5px;letter-spacing:0.5px;">CORPORACI?N</div>
<div class="c d" style="top:478.41px;font-size:10.15px;left:572.5px;letter-spacing:0.11px;">P?BLICA ESTRAT?GICA</div>
<div class="c d" style="top:461.41px;font-size:10.15px;left:572.5px;letter-spacing:0.09px;">EMPRESA EL?CTRICA</div>
<div class="c d" style="top:529.73px;font-size:10.95px;left:779.2px;width:60px;text-align:center;">83,28</div>
<div class="c d" style="top:529.73px;font-size:10.95px;left:846.0px;width:60px;text-align:center;">0,00</div>
<div class="c d" style="top:529.73px;font-size:10.95px;left:919.0px;width:60px;text-align:center;">83,28</div>
<div class="c d" style="top:529.73px;font-size:10.95px;left:1002.5px;width:60px;text-align:center;">83,28</div>
<div class="c d" style="top:528.91px;font-size:10.15px;left:1080.5px;width:70px;text-align:center;">SIN. RET</div>
<div class="c d" style="top:529.73px;font-size:10.95px;left:1257.5px;width:50px;text-align:center;">0,00</div>
<div class="a" style="left:1312px;top:524px;width:32px;height:18px;overflow:hidden"><div class="c d" style="left:15.300px;top:5.73px;font-size:10.95px">332</div></div>
<div class="c d" style="top:615.73px;font-size:10.95px;right:1320.4px;">30</div>
<div class="c d" style="top:615.73px;font-size:10.95px;right:1254px;letter-spacing:.28px;">31/8/2022</div>
<div class="c d" style="top:615.73px;font-size:10.95px;left:117px;">043</div>
<div class="c d" style="top:615.73px;font-size:10.95px;left:146px;">029</div>
<div class="c d" style="top:615.73px;font-size:10.95px;left:175px;">013075927</div>
<div class="c d" style="top:615.73px;font-size:10.95px;left:248px;">0968599020001</div>
<div class="c d" style="top:614.91px;font-size:10.15px;left:344px;">FACT. ELEC.</div>
<div class="c d" style="top:615.23px;font-size:10.95px;left:417px;letter-spacing:.04px;">1794910</div>
<div class="c d" style="top:598.23px;font-size:10.95px;left:417px;letter-spacing:.04px;">012043029013075927101</div>
<div class="c d" style="top:581.23px;font-size:10.95px;left:417px;letter-spacing:.04px;">310820220109685990200</div>
<div class="c d" style="top:615.41px;font-size:10.15px;left:572.5px;letter-spacing:-0.08px;">ELECTRICIDAD CNEL EP</div>
<div class="c d" style="top:598.41px;font-size:10.15px;left:572.5px;letter-spacing:0.2px;">NACIONAL DE</div>
<div class="c d" style="top:581.41px;font-size:10.15px;left:572.5px;letter-spacing:0.5px;">CORPORACI?N</div>
<div class="c d" style="top:564.41px;font-size:10.15px;left:572.5px;letter-spacing:0.11px;">P?BLICA ESTRAT?GICA</div>
<div class="c d" style="top:547.41px;font-size:10.15px;left:572.5px;letter-spacing:0.09px;">EMPRESA EL?CTRICA</div>
<div class="c d" style="top:615.73px;font-size:10.95px;left:779.2px;width:60px;text-align:center;">13,01</div>
<div class="c d" style="top:615.73px;font-size:10.95px;left:846.0px;width:60px;text-align:center;">0,00</div>
<div class="c d" style="top:615.73px;font-size:10.95px;left:919.0px;width:60px;text-align:center;">13,01</div>
<div class="c d" style="top:615.73px;font-size:10.95px;left:1002.5px;width:60px;text-align:center;">13,01</div>
<div class="c d" style="top:614.91px;font-size:10.15px;left:1080.5px;width:70px;text-align:center;">SIN. RET</div>
<div class="c d" style="top:615.73px;font-size:10.95px;left:1257.5px;width:50px;text-align:center;">0,00</div>
<div class="a" style="left:1312px;top:610px;width:32px;height:18px;overflow:hidden"><div class="c d" style="left:15.300px;top:5.73px;font-size:10.95px">332</div></div>
<div class="c d" style="top:635.73px;font-size:10.95px;right:1320.4px;">31</div>
<div class="c d" style="top:634.91px;font-size:10.15px;left:344px;">FACT. FISI.</div>
<div class="c d" style="top:635.73px;font-size:10.95px;left:846.0px;width:60px;text-align:center;">0,00</div>
<div class="c d" style="top:635.73px;font-size:10.95px;left:919.0px;width:60px;text-align:center;">0,00</div>
<div class="c d" style="top:635.73px;font-size:10.95px;left:1002.5px;width:60px;text-align:center;">0,00</div>
<div class="c d" style="top:634.91px;font-size:10.15px;left:1080.5px;width:70px;text-align:center;">SIN. RET</div>
<div class="c d" style="top:635.73px;font-size:10.95px;left:1257.5px;width:50px;text-align:center;">0,00</div>
<div class="a" style="left:1312px;top:630px;width:32px;height:18px;overflow:hidden"><div class="c d" style="left:15.300px;top:5.73px;font-size:10.95px">332</div></div>
<div class="c d" style="top:655.73px;font-size:10.95px;right:1320.4px;">32</div>
<div class="c d" style="top:654.91px;font-size:10.15px;left:344px;">FACT. FISI.</div>
<div class="c d" style="top:655.73px;font-size:10.95px;left:846.0px;width:60px;text-align:center;">0,00</div>
<div class="c d" style="top:655.73px;font-size:10.95px;left:919.0px;width:60px;text-align:center;">0,00</div>
<div class="c d" style="top:655.73px;font-size:10.95px;left:1002.5px;width:60px;text-align:center;">0,00</div>
<div class="c d" style="top:654.91px;font-size:10.15px;left:1080.5px;width:70px;text-align:center;">SIN. RET</div>
<div class="c d" style="top:655.73px;font-size:10.95px;left:1257.5px;width:50px;text-align:center;">0,00</div>
<div class="a" style="left:1312px;top:650px;width:32px;height:18px;overflow:hidden"><div class="c d" style="left:15.300px;top:5.73px;font-size:10.95px">332</div></div>
<div class="a" style="left:26px;top:669px;width:1318px;height:9px;overflow:hidden">
<div class="c d" style="top:6.73px;font-size:10.95px;left:5.5px;">34</div>
<div class="c d" style="top:5.91px;font-size:10.15px;left:318px;">FACT. FISI.</div>
<div class="c d" style="top:6.73px;font-size:10.95px;left:820.0px;width:60px;text-align:center;">0,00</div>
<div class="c d" style="top:6.73px;font-size:10.95px;left:893.0px;width:60px;text-align:center;">0,00</div>
<div class="c d" style="top:6.73px;font-size:10.95px;left:976.5px;width:60px;text-align:center;">0,00</div>
<div class="c d" style="top:6.73px;font-size:10.95px;left:1226.5px;width:60px;text-align:center;">0,00</div>
<div class="c d" style="top:5.91px;font-size:10.15px;left:1054.5px;width:70px;text-align:center;">SIN. RET</div>
<div class="c d" style="top:6.73px;font-size:10.95px;left:1302px;">332</div>
</div>
<div class="a" style="left:62px;top:415.52px;width:35px;height:14.2px;overflow:hidden"><div class="hb" style="left:0;top:1px;font-size:11.2px;letter-spacing:0.05px;">FECHA</div></div>
<div class="hb" style="left:80.5px;width:200px;top:408.52px;font-size:11.2px;letter-spacing:0.05px;">Nº DE C</div>
<div class="hb" style="left:80.0px;width:200px;top:424.52px;font-size:11.2px;letter-spacing:0.05px;">OMPROBANTE</div>
<div class="hb" style="left:193.5px;width:200px;top:408.52px;font-size:11.2px;letter-spacing:0.05px;">Nº RUC</div>
<div class="a" style="left:259px;top:423.52px;width:65px;height:14.2px;overflow:hidden"><div class="hb" style="left:0;top:1px;font-size:11.2px;letter-spacing:0.05px;">PROVEEDOR</div></div>
<div class="hb" style="left:278.0px;width:200px;top:408.52px;font-size:11.2px;letter-spacing:0.05px;">TIPO</div>
<div class="a" style="left:347px;top:423.52px;width:50px;height:14.2px;overflow:hidden"><div class="hb" style="left:0;top:1px;font-size:11.2px;letter-spacing:0.05px;">COMPROBANTE</div></div>
<div class="hb" style="left:391.5px;width:200px;top:416.52px;font-size:11.2px;letter-spacing:0.05px;">AUTORIZACIÓN</div>
<div class="hb" style="left:538.5px;width:200px;top:416.52px;font-size:11.2px;letter-spacing:0.05px;">PROVEEDOR</div>
<div class="a" style="left:713px;top:415.52px;width:44px;height:14.2px;overflow:hidden"><div class="hb" style="left:0;top:1px;font-size:11.2px;letter-spacing:0.05px;">BASE 12%</div></div>
<div class="a" style="left:785px;top:415.52px;width:41px;height:14.2px;overflow:hidden"><div class="hb" style="left:0;top:1px;font-size:11.2px;letter-spacing:0.05px;">BASE 0%</div></div>
<div class="hb" style="left:865px;top:416.52px;font-size:11.2px;letter-spacing:0.05px;">IVA</div>
<div class="a" style="left:916px;top:420.52px;width:56px;height:14.2px;overflow:hidden"><div class="hb" style="left:0;top:1px;font-size:11.2px;letter-spacing:0.05px;">SUBTO-TAL</div></div>
<div class="hb" style="left:932.5px;width:200px;top:416.52px;font-size:11.2px;letter-spacing:0.05px;">TOTAL</div>
<div class="hb" style="left:1015.0px;width:200px;top:408.52px;font-size:11.2px;letter-spacing:0.05px;">Nº</div>
<div class="a" style="left:1082px;top:423.52px;width:55px;height:14.2px;overflow:hidden"><div class="hb" style="left:0;top:1px;font-size:11.2px;letter-spacing:0.05px;">RETENCION</div></div>
<div class="hb" style="left:1133.0px;width:200px;top:422.02px;font-size:11.2px;letter-spacing:0.05px;">RETENCION IVA</div>
<div class="a" style="left:1321px;top:421.02px;width:23px;height:14.2px;overflow:hidden"><div class="hb" style="left:0;top:1px;font-size:11.2px;letter-spacing:0.05px;">RETENCION</div></div>
<div class="c" style="top:441.18px;font-size:11.6px;left:918.5px;width:60px;text-align:center;font-weight:bold;letter-spacing:.3px;">332</div>
<div class="c" style="top:441.69px;font-size:11px;right:164px;font-weight:bold;letter-spacing:-.2px;">30%</div>
<div class="c" style="top:441.69px;font-size:11px;right:117px;font-weight:bold;letter-spacing:-.2px;">70%</div>
<div class="c" style="top:441.69px;font-size:11px;right:57px;font-weight:bold;letter-spacing:-.2px;">100%</div>
<div class="a" style="left:1336px;top:440.69px;width:8px;height:14px;overflow:hidden"><div class="hb" style="left:0;top:1px;font-size:11px;letter-spacing:0.05px;">C</div></div>
<div class="c" style="top:372.78px;font-size:11.6px;left:781.0px;width:120px;text-align:center;font-weight:bold;letter-spacing:.35px;">TOTAL 332</div>
<div class="c" style="top:372.78px;font-size:11.6px;right:379px;font-weight:bold;letter-spacing:.35px;">9986,65</div>
<div class="c" style="top:372.78px;font-size:11.6px;left:992px;font-weight:bold;letter-spacing:.3px;">343C</div>
<div class="c" style="top:372.78px;font-size:11.6px;left:1078px;font-weight:bold;letter-spacing:.3px;">343B</div>
<div class="c" style="top:372.78px;font-size:11.6px;right:164px;font-weight:bold;letter-spacing:.3px;">332</div>
<div class="c" style="top:372.78px;font-size:11.6px;right:117px;font-weight:bold;letter-spacing:.3px;">343</div>
<div class="c" style="top:372.78px;font-size:11.6px;left:1254px;font-weight:bold;letter-spacing:.3px;">312A</div>
<div class="a" style="left:1312px;top:370px;width:32px;height:16px;overflow:hidden"><div class="c" style="left:27px;top:2.18px;font-size:11.6px;font-weight:bold">343</div></div>
<div class="c" style="top:353.60px;font-size:11.1px;left:987.0px;width:90px;text-align:center;font-weight:bold;letter-spacing:0px;-webkit-text-stroke:.2px #000;">plásticas 1%</div>
<div class="c" style="top:336.60px;font-size:11.1px;left:987.0px;width:90px;text-align:center;font-weight:bold;letter-spacing:0px;-webkit-text-stroke:.2px #000;">Botellas</div>
<div class="c" style="top:353.60px;font-size:11.1px;left:1069.5px;width:90px;text-align:center;font-weight:bold;letter-spacing:0px;-webkit-text-stroke:.2px #000;">1,75%</div>
<div class="c" style="top:336.60px;font-size:11.1px;left:1069.5px;width:90px;text-align:center;font-weight:bold;letter-spacing:0px;-webkit-text-stroke:.2px #000;">urbanización</div>
<div class="c" style="top:319.60px;font-size:11.1px;left:1069.5px;width:90px;text-align:center;font-weight:bold;letter-spacing:0px;-webkit-text-stroke:.2px #000;">inmueble,</div>
<div class="c" style="top:302.60px;font-size:11.1px;left:1069.5px;width:90px;text-align:center;font-weight:bold;letter-spacing:0px;-webkit-text-stroke:.2px #000;">materias,</div>
<div class="c" style="top:285.60px;font-size:11.1px;left:1069.5px;width:90px;text-align:center;font-weight:bold;letter-spacing:0px;-webkit-text-stroke:.2px #000;">de obra</div>
<div class="c" style="top:268.60px;font-size:11.1px;left:1069.5px;width:90px;text-align:center;font-weight:bold;letter-spacing:0px;-webkit-text-stroke:.2px #000;">construcción</div>
<div class="c" style="top:251.60px;font-size:11.1px;left:1069.5px;width:90px;text-align:center;font-weight:bold;letter-spacing:0px;-webkit-text-stroke:.2px #000;">de</div>
<div class="c" style="top:234.60px;font-size:11.1px;left:1069.5px;width:90px;text-align:center;font-weight:bold;letter-spacing:0px;-webkit-text-stroke:.2px #000;">Actividades</div>
<div class="c" style="top:353.60px;font-size:11.1px;left:1149.5px;width:60px;text-align:center;font-weight:bold;letter-spacing:0px;-webkit-text-stroke:.2px #000;">n</div>
<div class="c" style="top:336.60px;font-size:11.1px;left:1149.5px;width:60px;text-align:center;font-weight:bold;letter-spacing:0px;-webkit-text-stroke:.2px #000;">retencio</div>
<div class="c" style="top:319.60px;font-size:11.1px;left:1149.5px;width:60px;text-align:center;font-weight:bold;letter-spacing:0px;-webkit-text-stroke:.2px #000;">no hay</div>
<div class="c" style="top:302.60px;font-size:11.1px;left:1149.5px;width:60px;text-align:center;font-weight:bold;letter-spacing:0px;-webkit-text-stroke:.2px #000;">Cuando</div>
<div class="c" style="top:353.60px;font-size:11.1px;left:1198.0px;width:60px;text-align:center;font-weight:bold;letter-spacing:0px;-webkit-text-stroke:.2px #000;">mpresa</div>
<div class="c" style="top:336.60px;font-size:11.1px;left:1198.0px;width:60px;text-align:center;font-weight:bold;letter-spacing:0px;-webkit-text-stroke:.2px #000;">microe</div>
<div class="c" style="top:319.60px;font-size:11.1px;left:1198.0px;width:60px;text-align:center;font-weight:bold;letter-spacing:0px;-webkit-text-stroke:.2px #000;">n</div>
<div class="c" style="top:302.60px;font-size:11.1px;left:1198.0px;width:60px;text-align:center;font-weight:bold;letter-spacing:0px;-webkit-text-stroke:.2px #000;">Regime</div>
<div class="c" style="top:285.60px;font-size:11.1px;left:1198.0px;width:60px;text-align:center;font-weight:bold;letter-spacing:0px;-webkit-text-stroke:.2px #000;">1%.-</div>
<div class="c" style="top:268.60px;font-size:11.1px;left:1198.0px;width:60px;text-align:center;font-weight:bold;letter-spacing:0px;-webkit-text-stroke:.2px #000;">100 % y</div>
<div class="c" style="top:354.54px;font-size:10px;left:1246.0px;width:70px;text-align:center;font-weight:bold;letter-spacing:-0.05px;-webkit-text-stroke:.2px #000;">1%</div>
<div class="c" style="top:338.54px;font-size:10px;left:1246.0px;width:70px;text-align:center;font-weight:bold;letter-spacing:-0.05px;-webkit-text-stroke:.2px #000;">Pecuarios</div>
<div class="c" style="top:322.54px;font-size:10px;left:1246.0px;width:70px;text-align:center;font-weight:bold;letter-spacing:-0.05px;-webkit-text-stroke:.2px #000;">o</div>
<div class="c" style="top:306.54px;font-size:10px;left:1246.0px;width:70px;text-align:center;font-weight:bold;letter-spacing:-0.05px;-webkit-text-stroke:.2px #000;">agricoilas</div>
<div class="c" style="top:290.54px;font-size:10px;left:1246.0px;width:70px;text-align:center;font-weight:bold;letter-spacing:-0.05px;-webkit-text-stroke:.2px #000;">Productos</div>
<div class="a" style="left:1312px;top:260px;width:32px;height:106px;overflow:hidden">
<div class="c" style="left:10px;top:93.60px;font-size:11.1px;font-weight:bold">1,75%</div>
<div class="c" style="left:4px;top:76.60px;font-size:11.1px;font-weight:bold">muebles</div>
<div class="c" style="left:10px;top:59.60px;font-size:11.1px;font-weight:bold">bienes</div>
<div class="c" style="left:19px;top:42.60px;font-size:11.1px;font-weight:bold">de</div>
<div class="c" style="left:10px;top:25.60px;font-size:11.1px;font-weight:bold">encia</div>
<div class="c" style="left:5px;top:8.60px;font-size:11.1px;font-weight:bold">Transfer</div>
</div>
<div class="c" style="top:274.17px;font-size:12.2px;left:570.5px;width:420px;text-align:center;font-weight:bold;letter-spacing:.07px;-webkit-text-stroke:.25px #000;">REGISTRO DE FACTURAS DE COMPRA Y RETENCIONES A</div>
<div class="c" style="top:291.17px;font-size:12.2px;left:570.5px;width:420px;text-align:center;font-weight:bold;letter-spacing:.07px;-webkit-text-stroke:.25px #000;">PROVEEDORES DE AGOSTO 2022</div>
<div class="a" style="left:24px;top:627px;width:25px;height:23px;border:2px solid #217346"></div>
<div class="a" style="left:44px;top:645px;width:7px;height:7px;background:#fff"></div>
<div class="a" style="left:45px;top:646px;width:5px;height:5px;background:#217346"></div>
<!-- ===== LOGO BANNER (picture over cells) ===== -->
<svg style="left:27px;top:213px" width="558" height="163" viewBox="27 213 558 163">
  <defs>
    <clipPath id="dome"><path d="M69.800 338.500 C64 290 92 240 137 240 C182 240 210 290 204.700 338.500Z"/></clipPath>
    <linearGradient id="vh" x1="0" y1="0" x2="0" y2="1"><stop offset="0" stop-color="#f26a1b"/><stop offset="1" stop-color="#e2101f"/></linearGradient>
    <pattern id="hatch" width="3" height="3" patternUnits="userSpaceOnUse" patternTransform="rotate(20)"><rect width="3" height="3" fill="#2f8fd8"/><path d="M0 1h3" stroke="#cfe6f7" stroke-width=".6"/></pattern>
  </defs>
  <!-- left blue triangle + yellow stripe -->
  <path d="M27 213H93.300L27 348.500Z" fill="#0b6cb8"/>
  <path d="M61 213H80L54.600 266.500H34.800Z" fill="#fbea17"/>
  <!-- green band + yellow-green parallelogram -->
  <path d="M280.500 213H584.700V358.800H210.200Z" fill="#00902f"/>
  <path d="M289.300 213H338L259.500 375.400H210.200Z" fill="#dfe000"/>
  <!-- right stripes -->
  <path d="M528.900 357.500H543.400L568.700 300.700H555.500Z" fill="#ffee00"/>
  <path d="M543.900 357.500H557.800L583.500 300.700H569.200Z" fill="#ffffff"/>
  <path d="M558.300 357.500H572L584.700 331V301.500Z" fill="#9bc31c"/>
  <!-- emblem -->
  <g clip-path="url(#dome)">
    <rect x="60" y="235" width="155" height="110" fill="#0b6cb8"/>
    <!-- hills -->
    <path d="M60 345 L70 338 L102 283 L122 292 L133 291 L142 283.500 L152 290 L159 284 L178 300 L204 330 L210 345Z" fill="#27a22d"/>
    <path d="M131 290 L142 283.200 L152.500 290 L141 298Z" fill="#f7b512"/>
    <!-- river -->
    <path d="M150 303 C160 306 168 311 164 318 C160 325 178 330 186 339 L128 339 C130 330 150 326 146 318 C143 311 140 306 150 303Z" fill="url(#hatch)"/>
    <!-- yellow road -->
    <path d="M113 282 C122 286 128 291 121 297 C114 303 132 304 142 307 C152 310 147 318 140 322 C132 327 128 332 128 339" fill="none" stroke="#f7c413" stroke-width="2.200"/>
    <path d="M142 307 C156 306 160 312 162 320 C164 326 170 326 174 326" fill="none" stroke="#f7c413" stroke-width="1.600"/>
    <!-- bridge -->
    <path d="M72.500 339.500 C90 312 112 297.500 137 297.500 C162 297.500 182 312 197 339.500" fill="none" stroke="#8a4513" stroke-width="3.200"/>
    <path d="M79 339.500 C92 322 100 314 112 306" fill="none" stroke="#8a4513" stroke-width="2"/>
    <path d="M186 327 C190 332 193 336 195 339.500" fill="none" stroke="#7a3a10" stroke-width="4"/>
    <g stroke="#7a3a10" stroke-width="1" fill="none">
      <path d="M100 313V326M104 309.500L108 326M113 304V326M117 302L121 326M125 299.500V326M131 298L134 326M138 297.500V326M144 298L141 326M150 299V326M156 301L152 326M162 304V326M168 308L164 326M174 313V326M179 318L176 326"/>
    </g>
    <rect x="74.400" y="325.500" width="129" height="4.300" fill="#8a4513"/>
    <rect x="74.400" y="325.500" width="129" height="1.200" fill="#a65a1e"/>
    <path d="M74 330 L70 339.500 M80 330 L75 339.500 M197 330 V339.500 M202 330 V339.500" stroke="#8a4513" stroke-width="2.400"/>
    <!-- leaves / cacao -->
    <path d="M78.500 304 C84 303 90 308 92.500 316 C85 317 79 311 78.500 304Z" fill="#5b9a35" stroke="#e8f0d8" stroke-width=".6"/>
    <path d="M82 292 C87 294 92 302 93 313 C86 310 82 301 82 292Z" fill="#f58a1f"/>
    <path d="M88 283 C94 288 97 300 95 312 C89 305 86 294 88 283Z" fill="#f9a61c"/>
    <path d="M93 286 C98 293 99 303 96.500 312 C93 304 91.500 294 93 286Z" fill="#e85d1c"/>
    <!-- pineapple -->
    <ellipse cx="102.500" cy="299" rx="6.800" ry="10" fill="#f7b73a"/>
    <path d="M97.500 295l10 8M97 300l9 7M99 291.500l9 7M107.500 295l-10 8M108 300l-9 7M106 291.500l-9 7" stroke="#e08a1c" stroke-width=".7"/>
    <path d="M102.500 291 L95.500 279 L100.300 284 L99.500 274.500 L102.500 282 L105 273 L105 283 L110 278 L102.500 291Z" fill="#4f9a3a"/>
    <!-- palm tree -->
    <path d="M177.300 288 C178.300 297 178.800 304 179.200 312 L181.600 312 C181.200 303 180.800 296 180.300 288Z" fill="#1e7b3a"/>
    <g fill="none" stroke="#b5d6be" stroke-width="3.600" stroke-linecap="round">
      <path d="M178.500 289 C172 283 166 281 161 284"/><path d="M178.500 289 C171 289 165 293 162.500 299"/><path d="M178.500 289 C176 281 172 276 166.500 274.500"/>
      <path d="M178.500 289 C178.500 280 177.500 274 176 269"/><path d="M178.500 289 C182 281 186 277.500 191 277"/><path d="M178.500 289 C184 287 189 290 191.500 296"/><path d="M178.500 289 C183 292 186 297 186.500 302"/>
      <path d="M178.500 289 C174 292 171 296 170.500 301"/><path d="M178.500 289 C181 284 183 279 183 273"/><path d="M178.500 289 C174 284 170 280 164.500 279.500"/>
    </g>
    <g fill="none" stroke="#2f8048" stroke-width="1" stroke-dasharray="1.200 .8">
      <path d="M178.500 289 C172 283 166 281 161 284"/><path d="M178.500 289 C171 289 165 293 162.500 299"/><path d="M178.500 289 C176 281 172 276 166.500 274.500"/>
      <path d="M178.500 289 C178.500 280 177.500 274 176 269"/><path d="M178.500 289 C182 281 186 277.500 191 277"/><path d="M178.500 289 C184 287 189 290 191.500 296"/><path d="M178.500 289 C183 292 186 297 186.500 302"/>
      <path d="M178.500 289 C174 292 171 296 170.500 301"/><path d="M178.500 289 C181 284 183 279 183 273"/><path d="M178.500 289 C174 284 170 280 164.500 279.500"/>
    </g>
    <!-- sun -->
    <g transform="translate(132.600 269.400) rotate(12) scale(1 1.12)" fill="#f6a21b">
      <g id="ray"><path d="M-2.600 -12.400H2.600L1.600 -5H-1.600Z"/></g>
      <use href="#ray" transform="rotate(45)"/><use href="#ray" transform="rotate(90)"/><use href="#ray" transform="rotate(135)"/>
      <use href="#ray" transform="rotate(180)"/><use href="#ray" transform="rotate(225)"/><use href="#ray" transform="rotate(270)"/><use href="#ray" transform="rotate(315)"/>
      <circle r="6.400" fill="#f6a21b"/><circle r="5" fill="#fbe91a"/><circle r="2.800" fill="#0b6cb8"/>
    </g>
  </g>
  <!-- emblem text -->
  <text y="361.900" font-family="Liberation Sans, sans-serif" fill="url(#vh)" stroke="#e8321d" stroke-width=".35"><tspan x="69.500" font-size="28.500" textLength="17.500" lengthAdjust="spacingAndGlyphs">V</tspan><tspan x="87" font-size="20" textLength="32.500" lengthAdjust="spacingAndGlyphs">alle</tspan><tspan font-size="8"> </tspan><tspan x="125.800" font-size="28.500" textLength="13.500" lengthAdjust="spacingAndGlyphs">H</tspan><tspan x="140" font-size="20" textLength="65.500" lengthAdjust="spacingAndGlyphs">ermoso</tspan></text>
  <text x="139.200" y="350.100" font-family="Liberation Sans, sans-serif" font-weight="bold" font-size="9.400" fill="#1e7b3a" textLength="66.300" lengthAdjust="spacingAndGlyphs">GAD PARROQUIAL</text>
  <!-- banner text -->
  <g font-family="Liberation Sans, sans-serif" fill="#f3faf3">
    <text x="361.500" y="249.600" font-size="15.400" textLength="149" lengthAdjust="spacingAndGlyphs">Acuerdo Ministerial Nº 1359</text>
    <text x="361.500" y="267.200" font-size="15.400" textLength="113" lengthAdjust="spacingAndGlyphs">RUC : 1768120600001</text>
    <text x="369.800" y="297.300" font-size="12.800" textLength="99.600" lengthAdjust="spacingAndGlyphs">(02)2773220 / 2773300</text>
    <text x="369.800" y="319.300" font-size="12.800" textLength="155.600" lengthAdjust="spacingAndGlyphs">gadprvallehermoso@hotmail.com</text>
    <text x="369.800" y="341.800" font-size="12.800" textLength="123.500" lengthAdjust="spacingAndGlyphs">www.vallehermoso.gob.ec</text>
  </g>
  <!-- phone icon -->
  <path d="M355.200 288.300 l2.300 -.8 1.500 3.200 -1.400 1.200 c.6 1.600 1.700 2.900 3.200 3.700 l1.300 -1.300 2.900 1.900 -1.100 2.100 c-4.500 .6 -9.300 -4.800 -8.700 -10z" fill="#fff"/>
  <!-- mail icon -->
  <rect x="354.200" y="312.300" width="10" height="7.600" rx=".8" fill="#fff"/>
  <path d="M354.600 312.700l4.600 3.700 4.600-3.700M354.600 319.500l3.400-3.200M363.800 319.500l-3.400-3.200" fill="none" stroke="#00902f" stroke-width=".9"/>
  <!-- cursor icon -->
  <path d="M357 333 V343 L359.300 341 L360.800 344.300 L362.200 343.600 L360.700 340.400 L363.600 340.200Z" fill="#fff"/>
</svg>
<!-- ===== VERTICAL SCROLLBAR ===== -->
<div class="a" style="left:1345px;top:189px;width:21px;height:490px;background:#fff"></div>
<div class="a" style="left:1348px;top:206px;width:15px;height:457px;background:#f0f0f0"></div>
<div class="a" style="left:1348px;top:191px;width:15px;height:15px;border:1px solid #ababab;background:#fff"></div>
<div class="a" style="left:1352px;top:196px;width:0;height:0;border-left:3.500px solid transparent;border-right:3.500px solid transparent;border-bottom:4px solid #777"></div>
<div class="a" style="left:1348px;top:435px;width:15px;height:89px;border:1px solid #ababab;background:#fff"></div>
<div class="a" style="left:1348px;top:663px;width:15px;height:15px;border:1px solid #ababab;background:#fff"></div>
<div class="a" style="left:1352px;top:669px;width:0;height:0;border-left:3.500px solid transparent;border-right:3.500px solid transparent;border-top:4px solid #777"></div>

<!-- ===== SHEET TABS ===== -->
<div class="a" style="left:0;top:679px;width:1366px;height:27px;background:#f3f3f3"></div>
<div class="a" style="left:26px;top:688px;width:0;height:0;border-top:4px solid transparent;border-bottom:4px solid transparent;border-right:4.500px solid #217346"></div>
<div class="a" style="left:56px;top:688px;width:0;height:0;border-top:4px solid transparent;border-bottom:4px solid transparent;border-left:4.500px solid #c0c0c0"></div>
<div class="t" style="left:81px;top:685px;font-size:13px;font-weight:bold;color:#217346;letter-spacing:.3px">...</div>
<div class="a" style="left:100px;top:682px;width:1px;height:20px;background:#c6c6c6"></div>
<div class="a" style="left:189px;top:682px;width:1px;height:20px;background:#c6c6c6"></div>
<div class="a" style="left:281px;top:682px;width:1px;height:20px;background:#c6c6c6"></div>
<div class="a" style="left:376px;top:682px;width:1px;height:20px;background:#c6c6c6"></div>
<div class="a" style="left:471px;top:682px;width:1px;height:20px;background:#c6c6c6"></div>
<div class="t" style="left:113px;top:686px;font-size:12.600px;color:#444;letter-spacing:-.1px">MAR. 2022</div>
<div class="t" style="left:203px;top:686px;font-size:12.600px;color:#444;letter-spacing:-.4px">ABRIL 2022</div>
<div class="t" style="left:294px;top:686px;font-size:12.600px;color:#444;letter-spacing:.1px">MAYO 2022</div>
<div class="t" style="left:389px;top:686px;font-size:12.600px;color:#444;letter-spacing:-.05px">JUNIO 2022</div>
<div class="t" style="left:484px;top:686px;font-size:12.600px;color:#444;letter-spacing:-.3px">JULIO 2022</div>
<div class="a" style="left:563px;top:679px;width:109px;height:24px;background:#fff;border-left:1px solid #c6c6c6;border-right:1px solid #c6c6c6;border-bottom:2px solid #217346"></div>
<div class="t" style="left:575px;top:686px;font-size:12.600px;color:#217346;font-weight:bold;letter-spacing:-.15px">AGOSTO 2022</div>
<svg style="left:705px;top:684px" width="16" height="16" viewBox="0 0 16 16"><circle cx="8" cy="8" r="7.200" fill="#f3f3f3" stroke="#6a6a6a" stroke-width="1.100"/><path d="M8 4.500v7M4.500 8h7" stroke="#6a6a6a" stroke-width="1.300"/></svg>
<div class="a" style="left:819px;top:686px;width:2px;height:2px;background:#b0b0b0;box-shadow:0 4px 0 #b0b0b0,0 8px 0 #b0b0b0"></div>
<!-- horizontal scrollbar -->
<div class="a" style="left:836px;top:685px;width:506px;height:15px;background:#e6e6e6"></div>
<div class="a" style="left:836px;top:685px;width:15px;height:15px;border:1px solid #ababab;background:#fff"></div>
<div class="a" style="left:841px;top:688.5px;width:0;height:0;border-top:4px solid transparent;border-bottom:4px solid transparent;border-right:4.500px solid #666"></div>
<div class="a" style="left:851px;top:685px;width:323px;height:15px;border:1px solid #ababab;background:#fff"></div>
<div class="a" style="left:1327px;top:685px;width:15px;height:15px;border:1px solid #ababab;background:#fff"></div>
<div class="a" style="left:1333px;top:688.5px;width:0;height:0;border-top:4px solid transparent;border-bottom:4px solid transparent;border-left:4.500px solid #666"></div>

<!-- ===== STATUS BAR ===== -->
<div class="a" style="left:0;top:706px;width:1366px;height:22px;background:#217346"></div>
<div class="t" style="left:7px;top:712.500px;font-size:10.600px;color:#fff;letter-spacing:-.55px">LISTO</div>
<div class="a" style="left:1071px;top:706px;width:38px;height:22px;background:#185c37"></div>
<svg style="left:1083px;top:710px" width="13" height="13" viewBox="0 0 13 13"><path d="M0.500 0.500h12v12h-12zM0.500 4.500h12M0.500 8.500h12M4.500 0.500v12M8.500 0.500v12" fill="none" stroke="#fff" stroke-width="1"/></svg>
<svg style="left:1121px;top:710px" width="14" height="13" viewBox="0 0 14 13"><path d="M0.500 0.500h13v12h-13z" fill="none" stroke="#fff" stroke-width="1"/><path d="M3.500 3.500h7v6h-7zM5 5.500h4M5 7.500h4" fill="none" stroke="#fff" stroke-width="1"/></svg>
<svg style="left:1159px;top:710px" width="14" height="13" viewBox="0 0 14 13"><path d="M0.500 0.500h13v12h-13z" fill="none" stroke="#fff" stroke-width="1"/><path d="M1 1h3v6H1zM7 1h4v6H7z" fill="#fff"/><path d="M5.500 0.500v7M0.500 7.500h13" stroke="#fff" stroke-width="1" fill="none"/></svg>
<div class="a" style="left:1190px;top:716px;width:6px;height:2px;background:#fff"></div>
<div class="a" style="left:1200px;top:716px;width:100px;height:1px;background:#fff"></div>
<div class="a" style="left:1248px;top:711px;width:4px;height:11px;background:#fff"></div>
<div class="a" style="left:1304px;top:716px;width:8px;height:2px;background:#fff"></div>
<div class="a" style="left:1307px;top:713px;width:2px;height:8px;background:#fff"></div>
<div class="t" style="left:1328px;top:712px;font-size:11.400px;color:#fff;letter-spacing:-.7px">100 %</div>

<!-- ===== TASKBAR ===== -->
<div class="a" style="left:0;top:728px;width:1366px;height:40px;background:#222222"></div>
<div class="a" style="left:210px;top:728px;width:52px;height:40px;background:#353535"></div>
<!-- windows logo -->
<svg style="left:14px;top:738px" width="21" height="20" viewBox="0 0 21 20"><path d="M0 2.800 8.500 1.600V9.500H0zM9.500 1.450 20.500 0V9.500H9.500zM0 10.500H8.500V18.400L0 17.200zM9.500 10.500H20.500V20L9.500 18.550z" fill="#fff"/></svg>
<!-- firefox -->
<svg style="left:65px;top:735px" width="24" height="25" viewBox="0 0 24 25">
  <defs><radialGradient id="ffg" cx=".6" cy=".25" r=".9"><stop offset="0" stop-color="#ffe226"/><stop offset=".45" stop-color="#ff8a16"/><stop offset=".8" stop-color="#ff3647"/><stop offset="1" stop-color="#e31587"/></radialGradient></defs>
  <path d="M12 1.500 C14 3 15.500 4.500 16 6.500 C17.500 5.500 18 4 18 3 C21.500 6 23.500 10 23 14.500 C22.300 20 17.800 24 12 24 C5.800 24 1 19.200 1 13.500 C1 10.500 2 8 3.500 6.500 C3.800 7.500 4.200 8.200 5 8.800 C5.500 6 8 4.500 9.500 4.500 C10.500 3.800 11.500 2.800 12 1.500Z" fill="url(#ffg)"/>
  <circle cx="11.800" cy="13.800" r="5" fill="#7542e5"/>
  <path d="M6.500 12 C8 9.500 11 9.500 12.500 10.500 C11 11 10.500 12 11 13 C9 13.800 7 13.500 6.500 12Z" fill="#ff9a1f"/>
</svg>
<!-- chrome -->
<svg style="left:118px;top:736px" width="26" height="26" viewBox="0 0 26 26">
  <circle cx="12" cy="11.500" r="11.200" fill="#fbbc05"/>
  <path d="M12 11.500 L2.300 5.900 A11.200 11.200 0 0 1 21.700 5.900Z" fill="#ea4335"/>
  <path d="M12 .3 A11.200 11.200 0 0 1 21.700 5.900 H12Z" fill="#ea4335"/>
  <path d="M2.300 5.900 A11.200 11.200 0 0 0 12 22.700 L17 14 L12 11.500Z" fill="#34a853"/>
  <circle cx="12" cy="11.500" r="5.200" fill="#fff"/><circle cx="12" cy="11.500" r="4.100" fill="#4285f4"/>
  <circle cx="18.200" cy="17.800" r="7.400" fill="#c9c9cf"/>
  <path d="M13.500 14.500 l3 2 3.400 0 3-2 -.5 4 -2.200 4.500 h-4 l-2.200-4.500z" fill="#8a8a92"/>
  <circle cx="16.300" cy="17.800" r="1" fill="#222"/><circle cx="20.100" cy="17.800" r="1" fill="#222"/>
  <ellipse cx="18.200" cy="21" rx="1.600" ry="1.100" fill="#3a3a3a"/>
</svg>
<!-- file explorer -->
<svg style="left:172px;top:738px" width="22" height="19" viewBox="0 0 22 19">
  <path d="M0.500 1.500 a1 1 0 0 1 1-1 h6.500 l1.500 2 h11 a1 1 0 0 1 1 1 v14.500 h-21z" fill="#ffd766"/>
  <rect x="0.500" y="3.500" width="21" height="14.500" rx="1" fill="#ffe699"/>
  <path d="M1.500 1.200h5" stroke="#37c6d0" stroke-width="1"/>
  <path d="M4.500 18 v-6.500 a1 1 0 0 1 1-1 h11 a1 1 0 0 1 1 1 V18 h-4 v-3.500 h-5 V18z" fill="#29a9e8"/>
</svg>
<!-- excel -->
<svg style="left:224px;top:736px" width="24" height="24" viewBox="0 0 24 24">
  <rect x="11" y="3.500" width="11.500" height="17" fill="#fff" stroke="#1e7145" stroke-width="1"/>
  <path d="M14 6.500h7M14 9.500h7M14 12.500h7M14 15.500h7M14 18h7M17.500 4v16.500" stroke="#1e7145" stroke-width="1.200"/>
  <path d="M0 3 L13.500 0.500 V23.500 L0 21Z" fill="#1e7145"/>
  <text x="6.800" y="16.600" font-family="Liberation Sans, sans-serif" font-size="12.500" font-weight="bold" fill="#fff" text-anchor="middle">X</text>
</svg>
<!-- word -->
<svg style="left:277px;top:736px" width="24" height="24" viewBox="0 0 24 24">
  <rect x="11" y="3.500" width="11.500" height="17" fill="#fff" stroke="#2b579a" stroke-width="1"/>
  <path d="M14.500 6.500h7M14.500 9h7M14.500 11.500h7M14.500 14h7M14.500 16.500h7M14.500 18.800h7" stroke="#2b579a" stroke-width="1.100"/>
  <path d="M0 3 L13.500 0.500 V23.500 L0 21Z" fill="#2b579a"/>
  <text x="6.800" y="16.400" font-family="Liberation Sans, sans-serif" font-size="11" font-weight="bold" fill="#fff" text-anchor="middle">W</text>
</svg>
<!-- SRI -->
<div class="a" style="left:330px;top:736px;width:24px;height:24px;background:#fff"></div>
<div class="t" style="left:330.500px;top:741.500px;font-size:14.600px;font-weight:bold;font-style:italic;color:#1537a8;letter-spacing:-1.1px;-webkit-text-stroke:.5px #1537a8">SRi</div>
<div class="a" style="left:350.500px;top:742.500px;width:2.500px;height:2.500px;border-radius:50%;background:#e8202a"></div>
<!-- running indicators -->
<div class="a" style="left:108px;top:766px;width:44px;height:2px;background:#a9a9a9"></div>
<div class="a" style="left:161px;top:766px;width:44px;height:2px;background:#a9a9a9"></div>
<div class="a" style="left:210px;top:766px;width:52px;height:2px;background:#b4b4b4"></div>
<div class="a" style="left:267px;top:766px;width:44px;height:2px;background:#a9a9a9"></div>
<div class="a" style="left:320px;top:766px;width:44px;height:2px;background:#a9a9a9"></div>
<!-- tray -->
<svg style="left:1099px;top:744px" width="13" height="8" viewBox="0 0 13 8"><path d="M1 7l5.500-5.500L12 7" fill="none" stroke="#fff" stroke-width="1.300"/></svg>
<svg style="left:1121px;top:740px" width="17" height="17" viewBox="0 0 17 17">
  <rect x="0.800" y="0.800" width="12.500" height="13.500" rx="4" fill="#1d9cab" stroke="#d9f2f4" stroke-width="1"/>
  <text x="7" y="11.300" font-family="Liberation Sans, sans-serif" font-size="11" font-weight="bold" fill="#fff" text-anchor="middle">e</text>
  <path d="M12.500 9.500 L16.500 16 H8.500Z" fill="#e53935" stroke="#fff" stroke-width=".5"/>
</svg>
<svg style="left:1144px;top:740px" width="18" height="16" viewBox="0 0 18 16">
  <rect x="4.500" y="1.500" width="12" height="9" fill="none" stroke="#fff" stroke-width="1.100"/>
  <path d="M10.500 10.500v3M7 14.200h7" stroke="#fff" stroke-width="1.100"/>
  <rect x="0.500" y="0.500" width="4.500" height="4" fill="#222" stroke="#fff" stroke-width="1"/>
  <path d="M2.700 4.500V12H5" fill="none" stroke="#fff" stroke-width="1"/>
</svg>
<svg style="left:1169px;top:739px" width="18" height="18" viewBox="0 0 18 18">
  <path d="M0.600 3.500 L15.500 1 V14 L0.600 13Z" fill="none" stroke="#fff" stroke-width="1.100"/>
  <path d="M5 10 C4.500 6.500 8 5 10 6.500 M10.500 4.500 L10.200 7 L7.800 6.300" fill="none" stroke="#fff" stroke-width="1"/>
  <circle cx="12.500" cy="13" r="4.300" fill="#e5202e"/>
  <path d="M12.500 10.300v3.300M12.500 14.800v1" stroke="#fff" stroke-width="1.300"/>
</svg>
<svg style="left:1192px;top:740px" width="18" height="16" viewBox="0 0 18 16">
  <path d="M1 5.500h3l4-3.500v12l-4-3.500H1z" fill="none" stroke="#fff" stroke-width="1.100"/>
  <path d="M10.500 5.500c1 1.200 1 3.800 0 5" fill="none" stroke="#fff" stroke-width="1"/>
  <path d="M12.700 3.800c1.900 2.200 1.900 6.200 0 8.400" fill="none" stroke="#9a9a9a" stroke-width="1"/>
  <path d="M15 2c2.800 3.400 2.800 8.600 0 12" fill="none" stroke="#6a6a6a" stroke-width="1"/>
</svg>
<div class="t" style="left:1221px;top:742px;font-size:10.800px;color:#fff;letter-spacing:-.8px">ESP</div>
<div class="t" style="left:1254px;width:54px;text-align:center;top:733px;font-size:11.600px;color:#fff;letter-spacing:-.35px">10:50</div>
<div class="t" style="left:1254px;width:54px;text-align:center;top:751px;font-size:11.600px;color:#fff;letter-spacing:.2px">1/9/2022</div>
<svg style="left:1325px;top:739px" width="26" height="26" viewBox="0 0 26 26">
  <path d="M0.500 0.500h15.500v11.500h-9l-3.500 3.500v-3.500h-3z" fill="#fff"/>
  <path d="M3 3.500h10.500M3 6h10.500M3 8.500h10.500" stroke="#222" stroke-width="1"/>
  <circle cx="15.500" cy="15.800" r="7.600" fill="#222" stroke="#c8c8c8" stroke-width="1"/>
  <text x="15.500" y="20" font-family="Liberation Sans, sans-serif" font-size="11.500" fill="#fff" text-anchor="middle">1</text>
</svg>
<div class="a" style="left:1361px;top:728px;width:1px;height:40px;background:#5a5a5a"></div>
</body>
</html>
